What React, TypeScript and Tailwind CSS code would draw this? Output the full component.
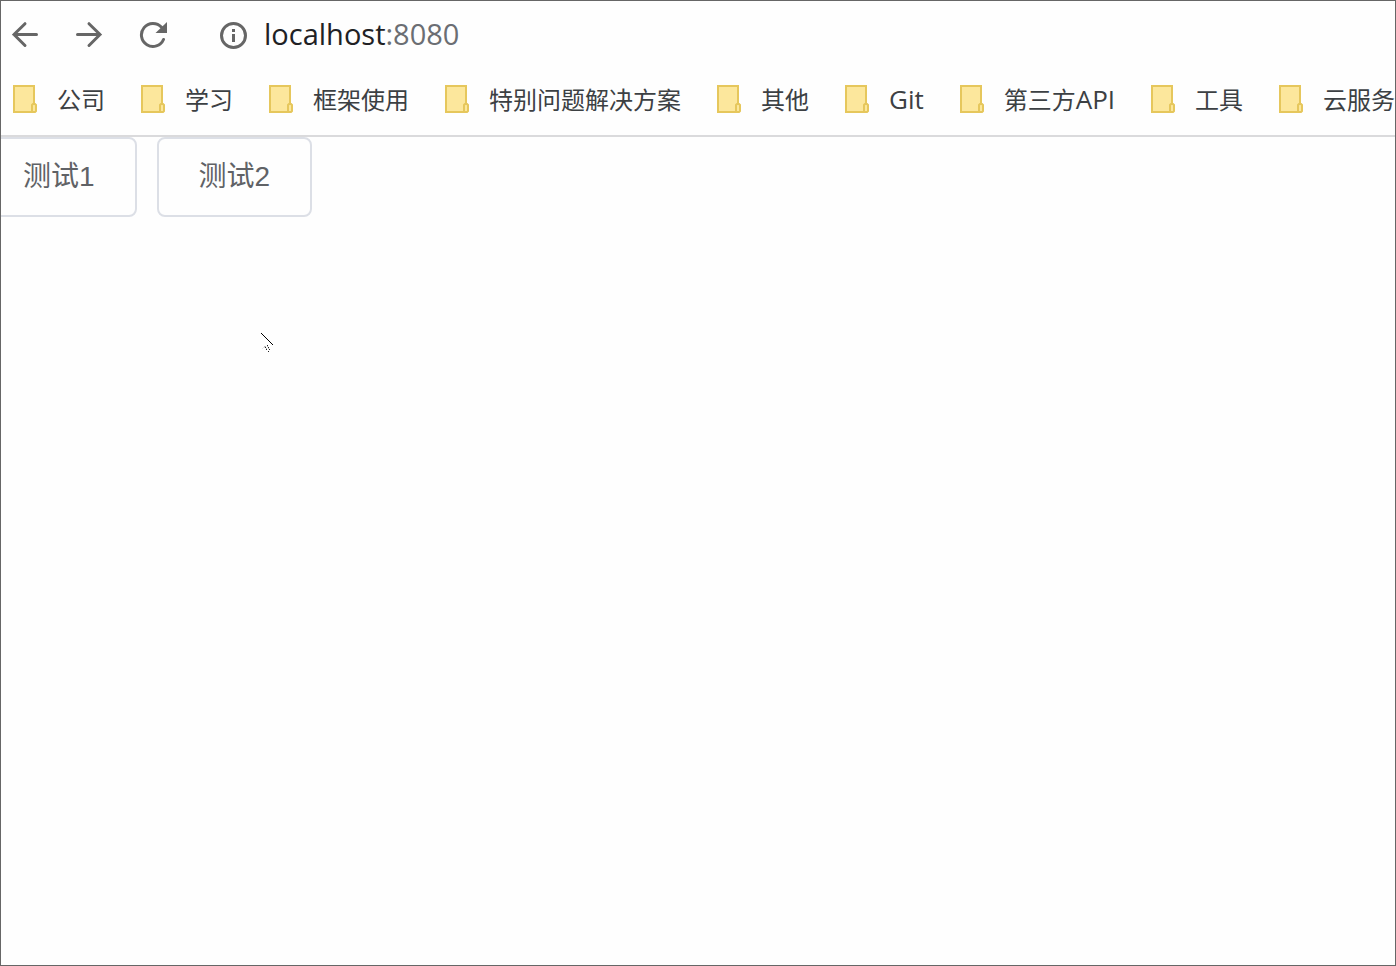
type Bookmark = { zh?: string; latin?: string };

const bookmarks: Bookmark[] = [
  { zh: "公司" },
  { zh: "学习" },
  { zh: "框架使用" },
  { zh: "特别问题解决方案" },
  { zh: "其他" },
  { latin: "Git" },
  { zh: "第三方", latin: "API" },
  { zh: "工具" },
  { zh: "云服务" },
];

const BackIcon = () => (
  <svg width="28" height="28" viewBox="0 0 28 28" fill="none" stroke="#666666" strokeWidth="3" strokeLinecap="round">
    <path d="M3 13.5H25.5M14 2.7L3 13.5L14 24.5" />
  </svg>
);

const ForwardIcon = () => (
  <svg width="28" height="28" viewBox="0 0 28 28" fill="none" stroke="#666666" strokeWidth="3" strokeLinecap="round">
    <path d="M2.5 13.5H25M14 2.7L25 13.5L14 24.5" />
  </svg>
);

const ReloadIcon = () => (
  <svg width="28" height="28" viewBox="0 0 28 28" fill="none">
    <path d="M22.5 6.3A11.5 11.5 0 1 0 24.5 18.5" stroke="#666666" strokeWidth="3" strokeLinecap="round" />
    <path d="M28 1V12H16.5Z" fill="#666666" />
  </svg>
);

const InfoIcon = () => (
  <svg width="28" height="28" viewBox="0 0 28 28" fill="none">
    <circle cx="14.5" cy="14.5" r="12" stroke="#666666" strokeWidth="3" />
    <path d="M13 8H16V11H13ZM13 13H16V21H13Z" fill="#666666" />
  </svg>
);

const FolderIcon = () => (
  <svg className="shrink-0" width="24" height="28" viewBox="0 0 24 28" fill="#fce79c" stroke="#e6c75c" strokeWidth="2">
    <path d="M1 1H21V27H1Z" />
    <path d="M19 27V20L20 19H22L23 20V26L22 27Z" />
  </svg>
);

const Cursor = () => (
  <svg className="absolute left-[260px] top-[332px]" width="16" height="22" viewBox="0 0 16 22" shapeRendering="crispEdges">
    {Array.from({ length: 12 }, (_, i) => (
      <rect key={i} x={i} y={i} width="1" height="1" fill="#000" />
    ))}
    <path d="M1 15h1v-1h3v1h-3v1h-1z" fill="#e3e3e3" />
    <path d="M3 13h2v1h-2zM6 13h1v1h-1zM7 15h1v1h-1zM5 15h1v1h-1z" fill="#bbb" />
    <path d="M6 12h1v1h-1zM4 14h1v1h-1zM7 14h1v1h-1zM5 16h1v1h-1zM8 16h1v1h-1zM7 18h1v1h-1z" fill="#222" />
  </svg>
);

const testButton =
  "h-20 shrink-0 rounded-lg border-2 border-[#dcdfe6] px-10 text-[28px] leading-8 text-[#606266] whitespace-nowrap";

export default function App() {
  return (
    <div className="relative min-h-screen overflow-hidden border border-[#666666] bg-[#fefefe] font-['Open_Sans','Noto_Sans_CJK_SC',sans-serif]">
      <header className="border-b-2 border-[#dadadc]">
        <div className="flex h-17 items-center gap-9 px-2.5">
          <button type="button" aria-label="Back"><BackIcon /></button>
          <button type="button" aria-label="Forward"><ForwardIcon /></button>
          <button type="button" aria-label="Reload"><ReloadIcon /></button>
          <div className="ml-4 flex items-center gap-[17px]">
            <button type="button" aria-label="Site information"><InfoIcon /></button>
            <span className="pb-0.5 text-[29px] leading-10 text-[#202124]">
              localhost<span className="text-[#6b6e73]">:8080</span>
            </span>
          </div>
        </div>

        <nav className="flex items-center gap-9 overflow-hidden px-3 pt-[11px] pb-[18px]">
          {bookmarks.map(({ zh, latin }) => (
            <a
              key={`${zh ?? ""}${latin ?? ""}`}
              href="#"
              className="flex shrink-0 items-center gap-5 text-2xl leading-[34px] whitespace-nowrap text-[#3c4043]"
            >
              <FolderIcon />
              <span className="pt-0.5">
                {zh}
                {latin && <span className="text-[26px]">{latin}</span>}
              </span>
            </a>
          ))}
        </nav>
      </header>

      <main className="-ml-5 flex gap-5 font-['Liberation_Sans','Noto_Sans_CJK_SC',sans-serif]">
        <button type="button" className={testButton}>测试1</button>
        <button type="button" className={testButton}>测试2</button>
      </main>

      <Cursor />
    </div>
  );
}
